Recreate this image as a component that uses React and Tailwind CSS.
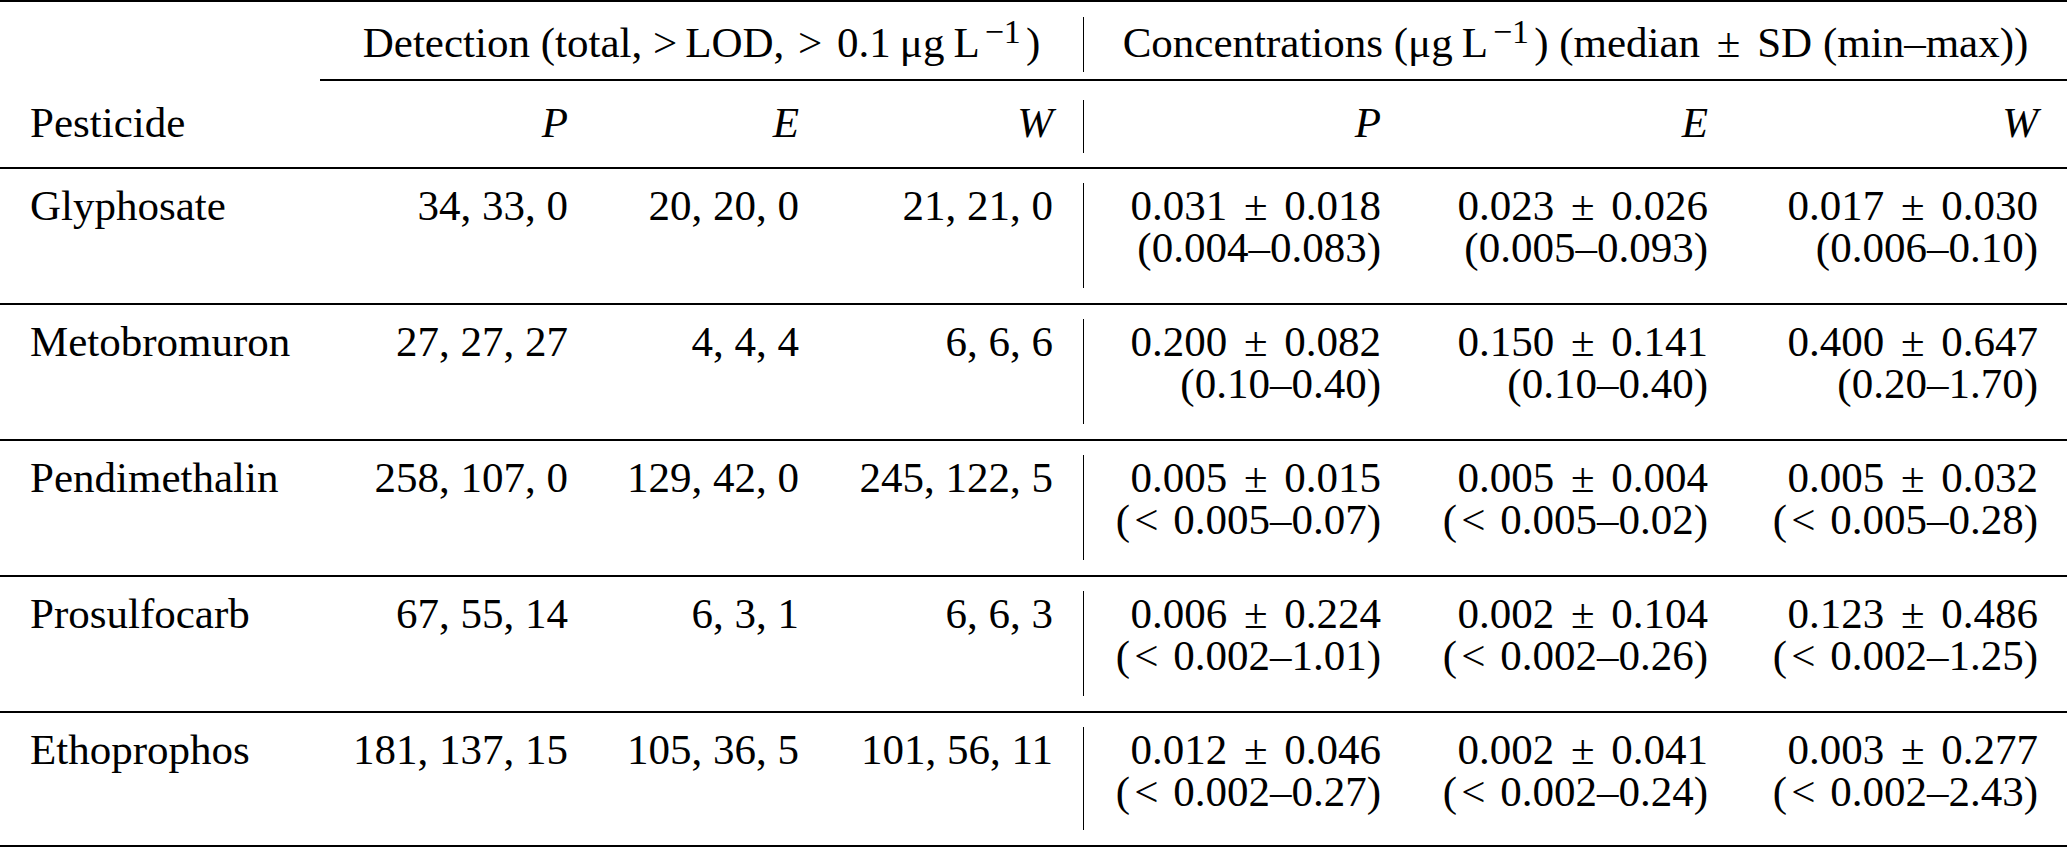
import React from "react";

const COLS = "grid grid-cols-[320px_278px_231px_254px_1px_327px_327px_329px]";

const rows = [
  {
    name: "Glyphosate",
    det: ["34, 33, 0", "20, 20, 0", "21, 21, 0"],
    conc: [
      ["0.031", "0.018", false, "0.004–0.083"],
      ["0.023", "0.026", false, "0.005–0.093"],
      ["0.017", "0.030", false, "0.006–0.10"],
    ],
  },
  {
    name: "Metobromuron",
    det: ["27, 27, 27", "4, 4, 4", "6, 6, 6"],
    conc: [
      ["0.200", "0.082", false, "0.10–0.40"],
      ["0.150", "0.141", false, "0.10–0.40"],
      ["0.400", "0.647", false, "0.20–1.70"],
    ],
  },
  {
    name: "Pendimethalin",
    det: ["258, 107, 0", "129, 42, 0", "245, 122, 5"],
    conc: [
      ["0.005", "0.015", true, "0.005–0.07"],
      ["0.005", "0.004", true, "0.005–0.02"],
      ["0.005", "0.032", true, "0.005–0.28"],
    ],
  },
  {
    name: "Prosulfocarb",
    det: ["67, 55, 14", "6, 3, 1", "6, 6, 3"],
    conc: [
      ["0.006", "0.224", true, "0.002–1.01"],
      ["0.002", "0.104", true, "0.002–0.26"],
      ["0.123", "0.486", true, "0.002–1.25"],
    ],
  },
  {
    name: "Ethoprophos",
    det: ["181, 137, 15", "105, 36, 5", "101, 56, 11"],
    conc: [
      ["0.012", "0.046", true, "0.002–0.27"],
      ["0.002", "0.041", true, "0.002–0.24"],
      ["0.003", "0.277", true, "0.002–2.43"],
    ],
  },
];

function Unit() {
  return (
    <>
      <span className="ml-[9px]">μg</span>
      <span className="ml-[9px]">L</span>
      <sup className="ml-[5px] text-[34px] -top-[14px]">−1</sup>
    </>
  );
}

export default function App() {
  return (
    <div className="w-[2067px] h-[848px] overflow-hidden bg-white text-black [font-family:'Liberation_Serif','Times_New_Roman',serif] text-[43px] leading-[42px]">
      <div className="border-t-2 border-black">
        {/* Header row 1 */}
        <div className={`${COLS} h-[77px]`}>
          <div />
          <div className="col-span-3 pt-[20px] text-center whitespace-nowrap">
            Detection (total, <span className="mr-[8px]">&gt;</span>LOD,{" "}
            <span className="ml-[3px] mr-[4px]">&gt;</span> 0.1
            <Unit />
            <span className="ml-[5px]">)</span>
          </div>
          <div className="bg-black mt-[15px] mb-[7px]" />
          <div className="col-span-3 pt-[20px] text-center whitespace-nowrap">
            Concentrations (<span className="-ml-[9px]" />
            <Unit />
            <span className="ml-[5px]">)</span> (median <span className="mx-[6px]">±</span> SD (min–max))
          </div>
        </div>
        {/* cmidrule */}
        <div className={COLS}>
          <div />
          <div className="col-span-7 h-[2px] bg-black" />
        </div>
        {/* Header row 2 */}
        <div className={`${COLS} h-[86px]`}>
          <div className="pl-[30px] pt-[21px]">Pesticide</div>
          <div className="pr-[30px] pt-[21px] text-right italic">P</div>
          <div className="pr-[30px] pt-[21px] text-right italic">E</div>
          <div className="pr-[30px] pt-[21px] text-right italic">W</div>
          <div className="bg-black mt-[19px] mb-[14px]" />
          <div className="pr-[30px] pt-[21px] text-right italic">P</div>
          <div className="pr-[30px] pt-[21px] text-right italic">E</div>
          <div className="pr-[29px] pt-[21px] text-right italic">W</div>
        </div>
        {/* Body rows */}
        {rows.map((r, i) => (
          <div
            key={r.name}
            className={`${COLS} h-[136px] border-t-2 border-black ${
              i === rows.length - 1 ? "border-b-2" : ""
            }`}
          >
            <div className="pl-[30px] pt-[16px] whitespace-nowrap">{r.name}</div>
            {r.det.map((d, j) => (
              <div key={j} className="pr-[30px] pt-[16px] text-right whitespace-nowrap">
                {d}
              </div>
            ))}
            <div className="bg-black mt-[14px] mb-[15px]" />
            {r.conc.map((c, j) => (
              <div
                key={j}
                className={`${j === 2 ? "pr-[29px]" : "pr-[30px]"} pt-[16px] text-right whitespace-nowrap`}
              >
                <div>
                  {c[0]} <span className="mx-[6px]">±</span> {c[1]}
                </div>
                <div>
                  (
                  {c[2] ? (
                    <>
                      <span className="ml-[4px] mr-[4px]">&lt;</span>{" "}
                    </>
                  ) : null}
                  {c[3]})
                </div>
              </div>
            ))}
          </div>
        ))}
      </div>
    </div>
  );
}
